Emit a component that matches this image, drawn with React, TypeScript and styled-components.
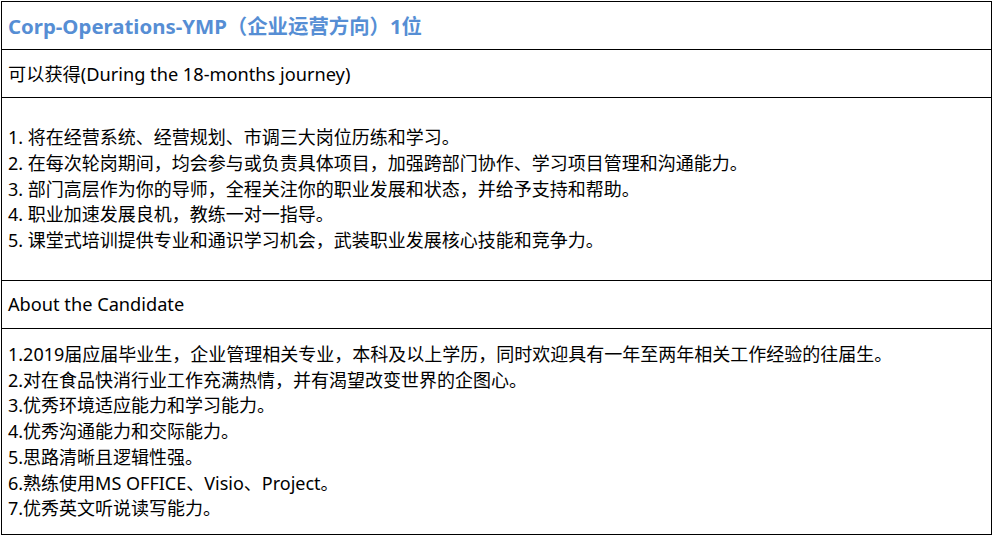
import React from "react";
import styled, { createGlobalStyle } from "styled-components";

const GlobalStyle = createGlobalStyle`
  html, body {
    margin: 0;
    padding: 0;
    background: #ffffff;
  }
  body {
    font-family: "Noto Sans", "Noto Sans CJK SC", sans-serif;
    color: #000000;
  }
`;

const gains = [
  "1. 将在经营系统、经营规划、市调三大岗位历练和学习。",
  "2. 在每次轮岗期间，均会参与或负责具体项目，加强跨部门协作、学习项目管理和沟通能力。",
  "3. 部门高层作为你的导师，全程关注你的职业发展和状态，并给予支持和帮助。",
  "4. 职业加速发展良机，教练一对一指导。",
  "5. 课堂式培训提供专业和通识学习机会，武装职业发展核心技能和竞争力。",
];

const requirements = [
  "1.2019届应届毕业生，企业管理相关专业，本科及以上学历，同时欢迎具有一年至两年相关工作经验的往届生。",
  "2.对在食品快消行业工作充满热情，并有渴望改变世界的企图心。",
  "3.优秀环境适应能力和学习能力。",
  "4.优秀沟通能力和交际能力。",
  "5.思路清晰且逻辑性强。",
  "6.熟练使用MS OFFICE、Visio、Project。",
  "7.优秀英文听说读写能力。",
];

export default function App() {
  return (
    <>
      <GlobalStyle />
      <Sheet>
        <Row height="48px">
          <Title>Corp-Operations-YMP（企业运营方向）1位</Title>
        </Row>
        <Row height="48px">
          <Label>可以获得(During the 18-months journey)</Label>
        </Row>
        <Row height="183px">
          <List>
            {gains.map((line) => (
              <Item key={line}>{line}</Item>
            ))}
          </List>
        </Row>
        <Row height="48px">
          <Label>About the Candidate</Label>
        </Row>
        <Row height="206px">
          <List>
            {requirements.map((line) => (
              <Item key={line}>{line}</Item>
            ))}
          </List>
        </Row>
      </Sheet>
    </>
  );
}

const Sheet = styled.div`
  display: flex;
  flex-direction: column;
  width: 991px;
  margin: 1px 0 0 1px;
  border: 1px solid #000000;
  border-bottom: none;
  box-sizing: border-box;
`;

const Row = styled.div<{ height: string }>`
  display: flex;
  align-items: center;
  flex: none;
  height: ${(p) => p.height};
  padding: 0 6px 2px;
  box-sizing: border-box;
  border-bottom: 1px solid #000000;
`;

const Title = styled.h1`
  margin: 0;
  font-size: 20.4px;
  font-weight: 700;
  color: #568ed4;
`;

const Label = styled.span`
  font-size: 18.2px;
`;

const List = styled.div`
  display: flex;
  flex-direction: column;
  padding-top: 3px;
`;

const Item = styled.p`
  margin: 0;
  font-size: 18px;
  line-height: 25.8px;
`;
